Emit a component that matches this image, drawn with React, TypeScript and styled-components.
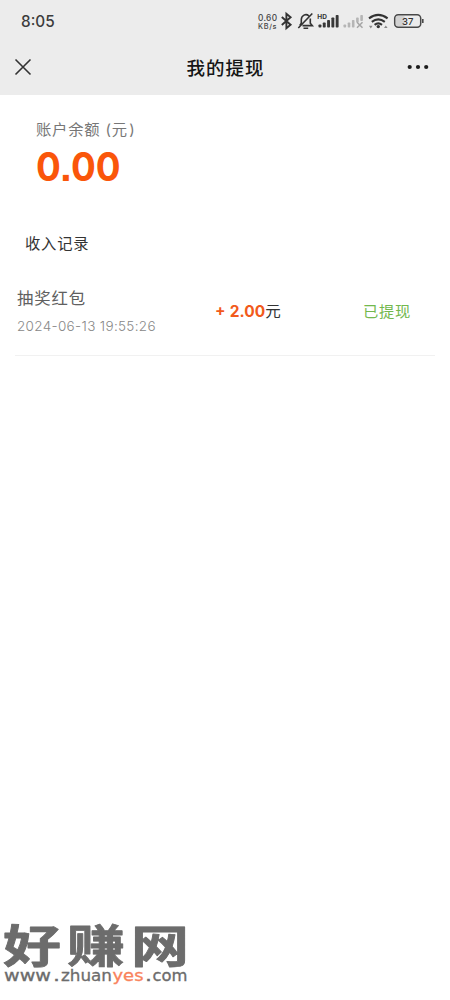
import React from "react";
import styled, { createGlobalStyle } from "styled-components";

const Global = createGlobalStyle`
  * { box-sizing: border-box; }
  body { margin: 0; background: #fff; font-family: Inter, "Noto Sans CJK SC", sans-serif; }
`;

const Page = styled.div`
  height: 1000px;
  display: flex;
  flex-direction: column;
  background: #fff;
  overflow: hidden;
`;
const Header = styled.header`
  height: 95px;
  background: #ececec;
`;
const StatusBar = styled.div`
  height: 42px;
  padding: 0 25px 0 21px;
  display: flex;
  justify-content: space-between;
  align-items: center;
`;
const Clock = styled.span`
  font-size: 15.3px;
  font-weight: 500;
  line-height: 20px;
  padding-top: 2px;
  color: #3c3c3c;
`;
const StatusIcons = styled.svg`
  display: block;
  width: 170px;
  height: 42px;
  font-family: Inter, sans-serif;
`;
const NavBar = styled.nav`
  height: 50px;
  padding: 0 21px 0 14px;
  display: grid;
  grid-template-columns: 60px 1fr 52px;
  align-items: center;
`;
const Title = styled.h1`
  margin: 0;
  padding-top: 1px;
  text-align: center;
  font-size: 18.5px;
  letter-spacing: 1px;
  line-height: 28px;
  font-weight: 500;
  color: #161616;
`;
const MoreIcon = styled.svg`
  justify-self: end;
`;
const Balance = styled.section`
  padding: 24px 36px 0;
  height: 138px;
`;
const BalanceLabel = styled.div`
  font-size: 15.3px;
  letter-spacing: 0.8px;
  line-height: 22px;
  color: #777;
  font-weight: 400;
`;
const Paren = styled.span<{ $shift: number }>`
  font-size: 15px;
  margin-left: ${(p) => p.$shift}px;
`;
const BalanceValue = styled.div`
  width: max-content;
  font-size: 40px;
  font-weight: 700;
  font-feature-settings: "ss07";
  line-height: 48px;
  margin-top: 2px;
  transform: scaleX(0.92);
  transform-origin: left;
  color: #fa560a;
`;
const SectionTitle = styled.h2`
  margin: 0;
  padding: 0 25px;
  font-size: 15.3px;
  letter-spacing: 0.8px;
  line-height: 22px;
  font-weight: 400;
  color: #333;
`;
const Records = styled.ul`
  list-style: none;
  margin: 30px 15px 0;
  padding: 0;
`;
const Record = styled.li`
  height: 71px;
  padding-left: 2px;
  display: grid;
  grid-template-columns: 198px 148px 1fr;
  border-bottom: 1px solid #f1f1f1;
`;
const RecordName = styled.div`
  font-size: 16.4px;
  letter-spacing: 0.9px;
  line-height: 26px;
  color: #606060;
`;
const RecordTime = styled.div`
  font-size: 13.5px;
  letter-spacing: 0.33px;
  line-height: 18px;
  margin-top: 6px;
  font-weight: 300;
  color: #888;
  white-space: nowrap;
`;
const Amount = styled.div`
  padding-top: 16px;
  font-size: 15.5px;
  line-height: 22px;
  color: #333;
`;
const Value = styled.strong`
  color: #f25a1b;
  font-weight: 700;
  word-spacing: 0.6px;
`;
const Status = styled.div`
  padding-top: 16px;
  font-size: 15.3px;
  letter-spacing: 0.7px;
  line-height: 22px;
  color: #73b84e;
`;
const Watermark = styled.svg`
  display: block;
  margin-top: auto;
  width: 200px;
  height: 110px;
  flex: none;
`;

const signal = [0, 1, 2, 3, 4];

const siteParts = [
  { text: "www", x: 4, width: 47, accent: false },
  { text: ".", x: 53, width: 7, accent: false },
  { text: "zhuan", x: 61, width: 51, accent: false },
  { text: "yes", x: 112.5, width: 31, accent: true },
  { text: ".", x: 145, width: 7, accent: false },
  { text: "com", x: 152.5, width: 35, accent: false },
];

function StatusGlyphs() {
  return (
    <StatusIcons viewBox="255 0 170 42">
      <g fill="#444" fontWeight="500">
        <text x="258" y="20.5" fontSize="8.3" textLength="19">0.60</text>
        <text x="258" y="29" fontSize="7.3" textLength="18.5">KB/s</text>
      </g>
      <path d="M281.8 17 290.6 24.8 286.4 28.3V13.8L290.6 17.3 281.8 25" fill="none" stroke="#333" strokeWidth="1.9" />
      <g fill="none" stroke="#333" strokeWidth="1.6">
        <path d="M299.8 25.5 301.3 23.3V19.5A4.6 5 0 0 1 308.8 15.8M310.3 18.5V23.3L312.3 25.6H302.5M303.5 28.3H308.2M312.3 13.5 298.3 28" />
      </g>
      <text x="317.3" y="18.7" fontSize="6.5" fontWeight="700" fill="#333">HD</text>
      {signal.map((i) => (
        <rect key={i} x={318.5 + i * 4.3} y={[24.5, 22.5, 20, 17.5, 15][i]} width="2.9" height={[3, 5, 7.5, 10, 12.5][i]} rx=".8" fill="#383838" />
      ))}
      {signal.map((i) => (
        <rect key={i} x={343.5 + i * 4.2} y={[24.5, 22.5, 20, 17.5, 15][i]} width="2.6" height={[3, 5, 7.5, 5, 6][i]} rx=".8" fill="#b5b5b5" />
      ))}
      <path d="m357 22.3 5.5 5.5m0-5.5-5.5 5.5" stroke="#a5a5a5" strokeWidth="1.5" />
      <g fill="none" stroke="#333" strokeWidth="2.1">
        <path d="M369 18.3Q378.3 11.3 387.6 18.3M371.8 21.8Q378.3 16.8 384.8 21.8M374.6 24.9Q378.3 22 382 24.9" />
      </g>
      <circle cx="378.3" cy="26.6" r="1.7" fill="#333" />
      <path d="m369 25.8 1.8 2.6 1.8-2.6zm15 2.2 1.8-2.6 1.8 2.6z" fill="#888" />
      <rect x="395.8" y="15.8" width="9" height="10.4" rx="2" fill="#d2d2d2" />
      <rect x="394.7" y="14.7" width="26" height="12.6" rx="3.5" fill="none" stroke="#484848" strokeWidth="1.5" />
      <path d="M422.8 19v4" stroke="#484848" strokeWidth="1.6" />
      <text x="407.7" y="24.5" fontSize="9.5" fontWeight="500" textAnchor="middle" fill="#333">37</text>
    </StatusIcons>
  );
}

export default function App() {
  return (
    <Page>
      <Global />
      <Header>
        <StatusBar>
          <Clock>8:05</Clock>
          <StatusGlyphs />
        </StatusBar>
        <NavBar>
          <svg width="18" height="18" viewBox="0 0 18 18">
            <path d="m1.5 1.5 15 15m0-15-15 15" stroke="#333" strokeWidth="1.6" />
          </svg>
          <Title>我的提现</Title>
          <MoreIcon width="22" height="6" viewBox="0 0 22 6" fill="#1c1c1c">
            <circle cx="2.7" cy="3" r="2.1" />
            <circle cx="11" cy="3" r="2.1" />
            <circle cx="19.2" cy="3" r="2.1" />
          </MoreIcon>
        </NavBar>
      </Header>
      <Balance>
        <BalanceLabel>
          账户余额<Paren $shift={5}>(</Paren>元<Paren $shift={1.5}>)</Paren>
        </BalanceLabel>
        <BalanceValue>0.00</BalanceValue>
      </Balance>
      <SectionTitle>收入记录</SectionTitle>
      <Records>
        <Record>
          <div>
            <RecordName>抽奖红包</RecordName>
            <RecordTime>2024-06-13 19:55:26</RecordTime>
          </div>
          <Amount><Value>+ 2.00</Value>元</Amount>
          <Status>已提现</Status>
        </Record>
      </Records>
      <Watermark viewBox="0 890 200 110">
        <g transform="translate(3 962.5) scale(1 .79)">
          <text fontFamily="Noto Sans CJK SC, sans-serif" fontWeight="700" fontSize="58" textLength="186" fill="#6c6c6c" stroke="#6c6c6c" strokeWidth="1" strokeLinejoin="round">好赚网</text>
        </g>
        {siteParts.map((part) => (
          <text
            key={part.x}
            x={part.x}
            y="981"
            fontFamily="DejaVu Sans, sans-serif"
            fontSize="15"
            textLength={part.width}
            lengthAdjust="spacingAndGlyphs"
            fill={part.accent ? "#f9835c" : "#6c6c6c"}
            stroke={part.accent ? "#f9835c" : "#6c6c6c"}
            strokeWidth=".3"
          >
            {part.text}
          </text>
        ))}
      </Watermark>
    </Page>
  );
}
